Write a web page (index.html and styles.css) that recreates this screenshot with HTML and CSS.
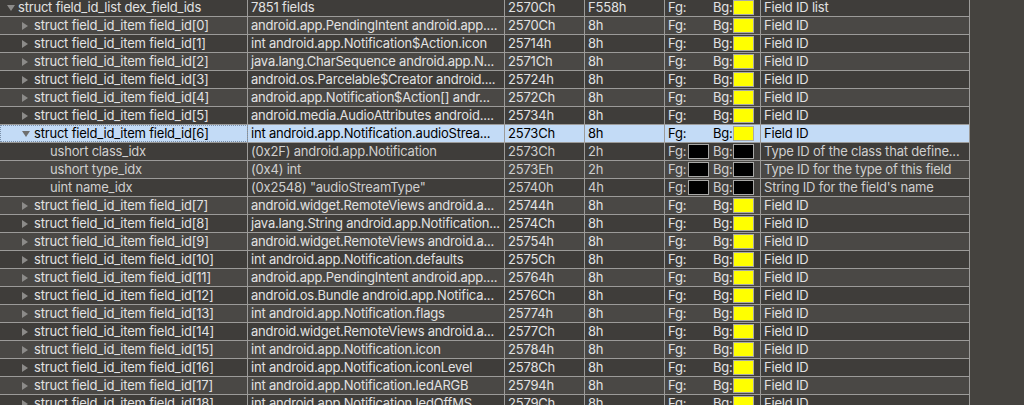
FILE: index.html
```html
<!DOCTYPE html>
<html>
<head>
<meta charset="utf-8">
<link rel="stylesheet" href="styles.css">
</head>
<body>
<div class="table">
  <div class="row dark">
    <div class="c name l0"><span class="tw"><svg width="8" height="6" viewBox="0 0 8 6"><path d="M0 0H8L4 6Z" fill="#8c8b89"/></svg></span>struct field_id_list dex_field_ids</div>
    <div class="c val">7851 fields</div>
    <div class="c st">2570Ch</div>
    <div class="c sz">F558h</div>
    <div class="c col"><span class="fg">Fg:</span><span class="sw none"></span><span class="bg">Bg:</span><span class="sw y"></span></div>
    <div class="c cm">Field ID list</div>
  </div>
  <div class="row light">
    <div class="c name l1"><span class="tw"><svg width="6" height="8" viewBox="0 0 6 8"><path d="M0 0V8L6 4Z" fill="#8c8b89"/></svg></span>struct field_id_item field_id[0]</div>
    <div class="c val">android.app.PendingIntent android.app....</div>
    <div class="c st">2570Ch</div>
    <div class="c sz">8h</div>
    <div class="c col"><span class="fg">Fg:</span><span class="sw none"></span><span class="bg">Bg:</span><span class="sw y"></span></div>
    <div class="c cm">Field ID</div>
  </div>
  <div class="row dark">
    <div class="c name l1"><span class="tw"><svg width="6" height="8" viewBox="0 0 6 8"><path d="M0 0V8L6 4Z" fill="#8c8b89"/></svg></span>struct field_id_item field_id[1]</div>
    <div class="c val">int android.app.Notification$Action.icon</div>
    <div class="c st">25714h</div>
    <div class="c sz">8h</div>
    <div class="c col"><span class="fg">Fg:</span><span class="sw none"></span><span class="bg">Bg:</span><span class="sw y"></span></div>
    <div class="c cm">Field ID</div>
  </div>
  <div class="row light">
    <div class="c name l1"><span class="tw"><svg width="6" height="8" viewBox="0 0 6 8"><path d="M0 0V8L6 4Z" fill="#8c8b89"/></svg></span>struct field_id_item field_id[2]</div>
    <div class="c val">java.lang.CharSequence android.app.N...</div>
    <div class="c st">2571Ch</div>
    <div class="c sz">8h</div>
    <div class="c col"><span class="fg">Fg:</span><span class="sw none"></span><span class="bg">Bg:</span><span class="sw y"></span></div>
    <div class="c cm">Field ID</div>
  </div>
  <div class="row dark">
    <div class="c name l1"><span class="tw"><svg width="6" height="8" viewBox="0 0 6 8"><path d="M0 0V8L6 4Z" fill="#8c8b89"/></svg></span>struct field_id_item field_id[3]</div>
    <div class="c val">android.os.Parcelable$Creator android....</div>
    <div class="c st">25724h</div>
    <div class="c sz">8h</div>
    <div class="c col"><span class="fg">Fg:</span><span class="sw none"></span><span class="bg">Bg:</span><span class="sw y"></span></div>
    <div class="c cm">Field ID</div>
  </div>
  <div class="row light">
    <div class="c name l1"><span class="tw"><svg width="6" height="8" viewBox="0 0 6 8"><path d="M0 0V8L6 4Z" fill="#8c8b89"/></svg></span>struct field_id_item field_id[4]</div>
    <div class="c val">android.app.Notification$Action[] andr...</div>
    <div class="c st">2572Ch</div>
    <div class="c sz">8h</div>
    <div class="c col"><span class="fg">Fg:</span><span class="sw none"></span><span class="bg">Bg:</span><span class="sw y"></span></div>
    <div class="c cm">Field ID</div>
  </div>
  <div class="row dark">
    <div class="c name l1"><span class="tw"><svg width="6" height="8" viewBox="0 0 6 8"><path d="M0 0V8L6 4Z" fill="#8c8b89"/></svg></span>struct field_id_item field_id[5]</div>
    <div class="c val">android.media.AudioAttributes android....</div>
    <div class="c st">25734h</div>
    <div class="c sz">8h</div>
    <div class="c col"><span class="fg">Fg:</span><span class="sw none"></span><span class="bg">Bg:</span><span class="sw y"></span></div>
    <div class="c cm">Field ID</div>
  </div>
  <div class="row sel">
    <div class="c name l1 focus"><span class="tw"><svg width="8" height="6" viewBox="0 0 8 6"><path d="M0 0H8L4 6Z" fill="#6f6f6f"/></svg></span>struct field_id_item field_id[6]</div>
    <div class="c val">int android.app.Notification.audioStrea...</div>
    <div class="c st">2573Ch</div>
    <div class="c sz">8h</div>
    <div class="c col"><span class="fg">Fg:</span><span class="sw none"></span><span class="bg">Bg:</span><span class="sw y"></span></div>
    <div class="c cm">Field ID</div>
  </div>
  <div class="row dark sub">
    <div class="c name l2">ushort class_idx</div>
    <div class="c val">(0x2F) android.app.Notification</div>
    <div class="c st">2573Ch</div>
    <div class="c sz">2h</div>
    <div class="c col"><span class="fg">Fg:</span><span class="sw k"></span><span class="bg">Bg:</span><span class="sw k"></span></div>
    <div class="c cm">Type ID of the class that define...</div>
  </div>
  <div class="row light sub">
    <div class="c name l2">ushort type_idx</div>
    <div class="c val">(0x4) int</div>
    <div class="c st">2573Eh</div>
    <div class="c sz">2h</div>
    <div class="c col"><span class="fg">Fg:</span><span class="sw k"></span><span class="bg">Bg:</span><span class="sw k"></span></div>
    <div class="c cm">Type ID for the type of this field</div>
  </div>
  <div class="row dark sub">
    <div class="c name l2">uint name_idx</div>
    <div class="c val">(0x2548) "audioStreamType"</div>
    <div class="c st">25740h</div>
    <div class="c sz">4h</div>
    <div class="c col"><span class="fg">Fg:</span><span class="sw k"></span><span class="bg">Bg:</span><span class="sw k"></span></div>
    <div class="c cm">String ID for the field's name</div>
  </div>
  <div class="row light">
    <div class="c name l1"><span class="tw"><svg width="6" height="8" viewBox="0 0 6 8"><path d="M0 0V8L6 4Z" fill="#8c8b89"/></svg></span>struct field_id_item field_id[7]</div>
    <div class="c val">android.widget.RemoteViews android.a...</div>
    <div class="c st">25744h</div>
    <div class="c sz">8h</div>
    <div class="c col"><span class="fg">Fg:</span><span class="sw none"></span><span class="bg">Bg:</span><span class="sw y"></span></div>
    <div class="c cm">Field ID</div>
  </div>
  <div class="row dark">
    <div class="c name l1"><span class="tw"><svg width="6" height="8" viewBox="0 0 6 8"><path d="M0 0V8L6 4Z" fill="#8c8b89"/></svg></span>struct field_id_item field_id[8]</div>
    <div class="c val">java.lang.String android.app.Notification...</div>
    <div class="c st">2574Ch</div>
    <div class="c sz">8h</div>
    <div class="c col"><span class="fg">Fg:</span><span class="sw none"></span><span class="bg">Bg:</span><span class="sw y"></span></div>
    <div class="c cm">Field ID</div>
  </div>
  <div class="row light">
    <div class="c name l1"><span class="tw"><svg width="6" height="8" viewBox="0 0 6 8"><path d="M0 0V8L6 4Z" fill="#8c8b89"/></svg></span>struct field_id_item field_id[9]</div>
    <div class="c val">android.widget.RemoteViews android.a...</div>
    <div class="c st">25754h</div>
    <div class="c sz">8h</div>
    <div class="c col"><span class="fg">Fg:</span><span class="sw none"></span><span class="bg">Bg:</span><span class="sw y"></span></div>
    <div class="c cm">Field ID</div>
  </div>
  <div class="row dark">
    <div class="c name l1"><span class="tw"><svg width="6" height="8" viewBox="0 0 6 8"><path d="M0 0V8L6 4Z" fill="#8c8b89"/></svg></span>struct field_id_item field_id[10]</div>
    <div class="c val">int android.app.Notification.defaults</div>
    <div class="c st">2575Ch</div>
    <div class="c sz">8h</div>
    <div class="c col"><span class="fg">Fg:</span><span class="sw none"></span><span class="bg">Bg:</span><span class="sw y"></span></div>
    <div class="c cm">Field ID</div>
  </div>
  <div class="row light">
    <div class="c name l1"><span class="tw"><svg width="6" height="8" viewBox="0 0 6 8"><path d="M0 0V8L6 4Z" fill="#8c8b89"/></svg></span>struct field_id_item field_id[11]</div>
    <div class="c val">android.app.PendingIntent android.app....</div>
    <div class="c st">25764h</div>
    <div class="c sz">8h</div>
    <div class="c col"><span class="fg">Fg:</span><span class="sw none"></span><span class="bg">Bg:</span><span class="sw y"></span></div>
    <div class="c cm">Field ID</div>
  </div>
  <div class="row dark">
    <div class="c name l1"><span class="tw"><svg width="6" height="8" viewBox="0 0 6 8"><path d="M0 0V8L6 4Z" fill="#8c8b89"/></svg></span>struct field_id_item field_id[12]</div>
    <div class="c val">android.os.Bundle android.app.Notifica...</div>
    <div class="c st">2576Ch</div>
    <div class="c sz">8h</div>
    <div class="c col"><span class="fg">Fg:</span><span class="sw none"></span><span class="bg">Bg:</span><span class="sw y"></span></div>
    <div class="c cm">Field ID</div>
  </div>
  <div class="row light">
    <div class="c name l1"><span class="tw"><svg width="6" height="8" viewBox="0 0 6 8"><path d="M0 0V8L6 4Z" fill="#8c8b89"/></svg></span>struct field_id_item field_id[13]</div>
    <div class="c val">int android.app.Notification.flags</div>
    <div class="c st">25774h</div>
    <div class="c sz">8h</div>
    <div class="c col"><span class="fg">Fg:</span><span class="sw none"></span><span class="bg">Bg:</span><span class="sw y"></span></div>
    <div class="c cm">Field ID</div>
  </div>
  <div class="row dark">
    <div class="c name l1"><span class="tw"><svg width="6" height="8" viewBox="0 0 6 8"><path d="M0 0V8L6 4Z" fill="#8c8b89"/></svg></span>struct field_id_item field_id[14]</div>
    <div class="c val">android.widget.RemoteViews android.a...</div>
    <div class="c st">2577Ch</div>
    <div class="c sz">8h</div>
    <div class="c col"><span class="fg">Fg:</span><span class="sw none"></span><span class="bg">Bg:</span><span class="sw y"></span></div>
    <div class="c cm">Field ID</div>
  </div>
  <div class="row light">
    <div class="c name l1"><span class="tw"><svg width="6" height="8" viewBox="0 0 6 8"><path d="M0 0V8L6 4Z" fill="#8c8b89"/></svg></span>struct field_id_item field_id[15]</div>
    <div class="c val">int android.app.Notification.icon</div>
    <div class="c st">25784h</div>
    <div class="c sz">8h</div>
    <div class="c col"><span class="fg">Fg:</span><span class="sw none"></span><span class="bg">Bg:</span><span class="sw y"></span></div>
    <div class="c cm">Field ID</div>
  </div>
  <div class="row dark">
    <div class="c name l1"><span class="tw"><svg width="6" height="8" viewBox="0 0 6 8"><path d="M0 0V8L6 4Z" fill="#8c8b89"/></svg></span>struct field_id_item field_id[16]</div>
    <div class="c val">int android.app.Notification.iconLevel</div>
    <div class="c st">2578Ch</div>
    <div class="c sz">8h</div>
    <div class="c col"><span class="fg">Fg:</span><span class="sw none"></span><span class="bg">Bg:</span><span class="sw y"></span></div>
    <div class="c cm">Field ID</div>
  </div>
  <div class="row light">
    <div class="c name l1"><span class="tw"><svg width="6" height="8" viewBox="0 0 6 8"><path d="M0 0V8L6 4Z" fill="#8c8b89"/></svg></span>struct field_id_item field_id[17]</div>
    <div class="c val">int android.app.Notification.ledARGB</div>
    <div class="c st">25794h</div>
    <div class="c sz">8h</div>
    <div class="c col"><span class="fg">Fg:</span><span class="sw none"></span><span class="bg">Bg:</span><span class="sw y"></span></div>
    <div class="c cm">Field ID</div>
  </div>
  <div class="row dark">
    <div class="c name l1"><span class="tw"><svg width="6" height="8" viewBox="0 0 6 8"><path d="M0 0V8L6 4Z" fill="#8c8b89"/></svg></span>struct field_id_item field_id[18]</div>
    <div class="c val">int android.app.Notification.ledOffMS</div>
    <div class="c st">2579Ch</div>
    <div class="c sz">8h</div>
    <div class="c col"><span class="fg">Fg:</span><span class="sw none"></span><span class="bg">Bg:</span><span class="sw y"></span></div>
    <div class="c cm">Field ID</div>
  </div>
</div>
</body>
</html>
```
FILE: styles.css
```css
html, body {
  margin: 0;
  padding: 0;
  background: #45433f;
  height: 100%;
  overflow: hidden;
}
.table {
  margin-top: -1px;
  width: 970px;
  font-family: Inter, "Liberation Sans", Arial, sans-serif;
  font-size: 13px;
  letter-spacing: -0.2px;
  color: #e2e2e2;
}
.row {
  display: flex;
  height: 18px;
  box-sizing: border-box;
  border-bottom: 1px solid #9c9b99;
}
.row.dark { background: #3f3d3a; }
.row.light { background: #4a4845; }
.row.sel { background: #c3dbf6; color: #000; }
.row.sub { color: #cfcfcf; }
.c {
  box-sizing: border-box;
  height: 17px;
  line-height: 17px;
  border-right: 1px solid #9c9b99;
  white-space: nowrap;
  overflow: hidden;
  padding-left: 3px;
  display: flex;
  align-items: center;
}
.name { width: 248px; }
.val { width: 257px; }
.st { width: 80px; }
.sz { width: 80px; }
.col { width: 96px; }
.cm { width: 209px; }
.name.l0 { padding-left: 7px; }
.name.l1 { padding-left: 22px; }
.name.l2 { padding-left: 50px; }
.name.focus { outline: 1px dotted #7a8fa8; outline-offset: -1px; }
.tw {
  width: 11px;
  flex: none;
  display: flex;
  align-items: center;
}
.tw svg { display: block; }
.l1 .tw { width: 12px; }
.fg { width: 20px; flex: none; }
.bg { width: 20px; flex: none; margin-left: 4px; }
.sw {
  width: 21px;
  height: 15px;
  box-sizing: border-box;
  flex: none;
}
.sw.y { background: #ffff00; border: 1px solid #a8a8a6; }
.sw.k { background: #000; border: 1px solid #a8a8a6; }
.sw.none { background: transparent; }
```
